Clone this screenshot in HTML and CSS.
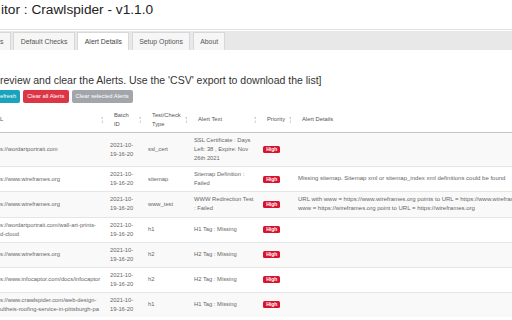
FILE: index.html
```html
<!DOCTYPE html>
<html>
<head>
<meta charset="utf-8">
<link rel="stylesheet" href="styles.css">
</head>
<body>
<h1 class="title">itor : Crawlspider - v1.1.0</h1>
<nav class="tabs">
  <div class="tabbar">
    <span class="tab tab-cut">s</span>
    <span class="tab">Default Checks</span>
    <span class="tab active">Alert Details</span>
    <span class="tab">Setup Options</span>
    <span class="tab">About</span>
  </div>
</nav>
<p class="intro">review and clear the Alerts. Use the 'CSV' export to download the list]</p>
<div class="buttons">
  <button class="btn btn-info btn-cut">efresh</button>
  <button class="btn btn-danger">Clear all Alerts</button>
  <button class="btn btn-secondary">Clear selected Alerts</button>
</div>
<table class="alerts">
  <colgroup>
    <col class="c-url"><col class="c-batch"><col class="c-type"><col class="c-text"><col class="c-prio"><col class="c-details">
  </colgroup>
  <thead>
    <tr>
      <th class="first"><div class="th-inner"><span>L</span><i class="sort"></i></div></th>
      <th><div class="th-inner"><span>Batch<br>ID</span><i class="sort"></i></div></th>
      <th><div class="th-inner"><span>Test/Check<br>Type</span><i class="sort"></i></div></th>
      <th><div class="th-inner"><span>Alert Text</span><i class="sort"></i></div></th>
      <th><div class="th-inner"><span>Priority</span><i class="sort"></i></div></th>
      <th><div class="th-inner"><span>Alert Details</span></div></th>
    </tr>
  </thead>
  <tbody>
    <tr>
      <td class="first">s://wordartportrait.com</td>
      <td>2021-10-<br>19-16-20</td>
      <td>ssl_cert</td>
      <td>SSL Certificate : Days Left: 38 , Expire: Nov 26th 2021</td>
      <td><span class="badge">High</span></td>
      <td class="details"></td>
    </tr>
    <tr>
      <td class="first">s://www.wireframes.org</td>
      <td>2021-10-<br>19-16-20</td>
      <td>sitemap</td>
      <td>Sitemap Definition : Failed</td>
      <td><span class="badge">High</span></td>
      <td class="details">Missing sitemap. Sitemap xml or sitemap_index xml definitions could be found</td>
    </tr>
    <tr>
      <td class="first">s://www.wireframes.org</td>
      <td>2021-10-<br>19-16-20</td>
      <td>www_test</td>
      <td>WWW Redirection Test : Failed</td>
      <td><span class="badge">High</span></td>
      <td class="details">URL with www = https://www.wireframes.org points to URL = https://www.wireframes.org and URL without<br>www = https://wireframes.org point to URL = https://wireframes.org</td>
    </tr>
    <tr>
      <td class="first">s://wordartportrait.com/wall-art-prints-<br>d-cloud</td>
      <td>2021-10-<br>19-16-20</td>
      <td>h1</td>
      <td>H1 Tag : Missing</td>
      <td><span class="badge">High</span></td>
      <td class="details"></td>
    </tr>
    <tr>
      <td class="first">s://www.wireframes.org</td>
      <td>2021-10-<br>19-16-20</td>
      <td>h2</td>
      <td>H2 Tag : Missing</td>
      <td><span class="badge">High</span></td>
      <td class="details"></td>
    </tr>
    <tr>
      <td class="first">s://www.infocaptor.com/docs/infocaptor</td>
      <td>2021-10-<br>19-16-20</td>
      <td>h2</td>
      <td>H2 Tag : Missing</td>
      <td><span class="badge">High</span></td>
      <td class="details"></td>
    </tr>
    <tr>
      <td class="first">s://www.crawlspider.com/web-design-<br>ultheis-roofing-service-in-pittsburgh-pa</td>
      <td>2021-10-<br>19-16-20</td>
      <td>h1</td>
      <td>H1 Tag : Missing</td>
      <td><span class="badge">High</span></td>
      <td class="details"></td>
    </tr>
  </tbody>
</table>
</body>
</html>
```
FILE: styles.css
```css
html, body {
  margin: 0;
  padding: 0;
  background: #fff;
  overflow: hidden;
}
body {
  width: 512px;
  height: 320px;
  font-family: "Liberation Sans", Arial, sans-serif;
  color: #333;
}
.title {
  margin: 0;
  padding: 3px 0 0 1px;
  font-size: 13.7px;
  line-height: 14px;
  font-weight: normal;
  color: #222;
  white-space: nowrap;
}
.tabs {
  margin-top: 12px;
  border-top: 1px solid #e2e2e2;
  padding-top: 1px;
}
.tabbar {
  background: #e8e8e8;
  height: 19px;
  box-sizing: border-box;
  padding-top: 1px;
  display: flex;
  gap: 2.7px;
  width: 600px;
}
.tab {
  height: 18px;
  line-height: 17px;
  box-sizing: border-box;
  padding: 0 6.3px;
  font-size: 6.9px;
  color: #555;
  background: #f6f6f6;
  border: 1px solid #d8d8d8;
  border-bottom: none;
  white-space: nowrap;
}
.tab-cut {
  padding-left: 0;
  border-left: none;
}
.tab.active {
  background: #fff;
  color: #444;
}
.intro {
  margin: 24px 0 0 0;
  font-size: 10.5px;
  line-height: 12px;
  color: #333;
  white-space: nowrap;
}
.buttons {
  margin-top: 4px;
  display: flex;
  gap: 3px;
}
.btn {
  height: 13px;
  border: none;
  border-radius: 2px;
  padding: 0 4px;
  font-family: "Liberation Sans", Arial, sans-serif;
  font-size: 5.8px;
  line-height: 13px;
  color: #fff;
}
.btn-cut {
  padding-left: 0;
  border-radius: 0 2px 2px 0;
}
.btn-info { background: #1aa3bd; }
.btn-danger { background: #dc3545; }
.btn-secondary { background: #a2a6ab; }
.alerts {
  margin-top: 4px;
  border-collapse: collapse;
  table-layout: fixed;
  width: 594px;
  font-size: 5.8px;
  line-height: 9px;
}
.c-url { width: 106px; }
.c-batch { width: 38px; }
.c-type { width: 46px; }
.c-text { width: 69px; }
.c-prio { width: 35px; }
.c-details { width: 300px; }
.alerts th {
  text-align: left;
  font-weight: normal;
  color: #555;
  padding: 3.5px 2.5px 3.5px 8px;
  border-bottom: 1.5px solid #c4c4c4;
  vertical-align: middle;
}
.alerts th.first { padding-left: 0; }
.th-inner {
  display: flex;
  align-items: center;
  justify-content: space-between;
}
.sort {
  width: 3px;
  height: 6px;
  flex: none;
  background:
    linear-gradient(to top right, transparent 50%, #d2d2d2 50%) left top / 1.5px 2.5px no-repeat,
    linear-gradient(to top left, transparent 50%, #d2d2d2 50%) right top / 1.5px 2.5px no-repeat,
    linear-gradient(to bottom right, transparent 50%, #d2d2d2 50%) left bottom / 1.5px 2.5px no-repeat,
    linear-gradient(to bottom left, transparent 50%, #d2d2d2 50%) right bottom / 1.5px 2.5px no-repeat;
}
.alerts td {
  padding: 3px 4px;
  color: #666;
  vertical-align: middle;
  border-top: 1px solid #e6e6e6;
}
.alerts td.first { padding-left: 0; white-space: nowrap; }
.alerts td.details {
  white-space: nowrap;
  font-size: 6px;
  line-height: 9.3px;
}
.alerts tbody tr:nth-child(odd) td { background: #f9f9f9; }
.badge {
  display: inline-block;
  background: #d8132f;
  color: #fff;
  font-weight: bold;
  font-size: 5px;
  line-height: 7px;
  padding: 0 3.2px;
  border-radius: 1.5px;
}
```
